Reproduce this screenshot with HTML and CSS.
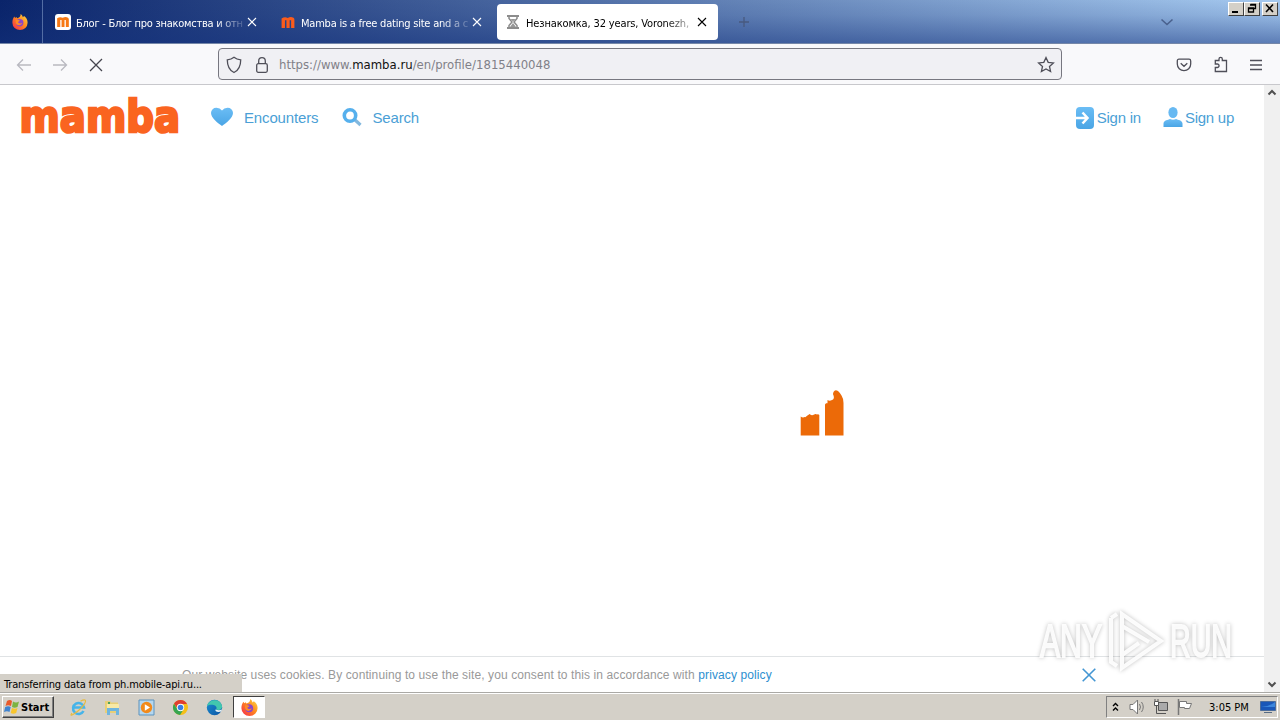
FILE: index.html
```html
<!DOCTYPE html>
<html lang="en">
<head>
<meta charset="utf-8">
<title>Mamba</title>
<link rel="stylesheet" href="styles.css">
</head>
<body>
<svg class="defs" width="0" height="0">
  <defs>
    <linearGradient id="blue" x1="0" y1="0" x2="0" y2="1"><stop offset="0" stop-color="#6bbdf5"/><stop offset="1" stop-color="#4aa5e5"/></linearGradient>
    <linearGradient id="flame" x1="1" y1="0" x2="0" y2="1"><stop offset="0" stop-color="#ffe14a"/><stop offset=".45" stop-color="#ff8a1e"/><stop offset="1" stop-color="#f5254f"/></linearGradient>
    <linearGradient id="edge" x1="0" y1="0" x2="1" y2="1"><stop offset="0" stop-color="#1a8fd0"/><stop offset="1" stop-color="#0b54a5"/></linearGradient>
    <symbol id="firefox" viewBox="0 0 16 16">
      <path d="M8.6 0c1.4 1 2 2 2.2 3.200l1.300-1.200c2 1.600 3.700 3.800 3.500 6.800A7.600 7.200 0 0 1 .4 8.800C.3 6 1.300 3.800 2.500 2.600l.5 1.500L4.500 3l.6 1.200C7 3.800 8.800 2.500 8.600 0z" fill="url(#flame)"/>
      <circle cx="7.700" cy="8.700" r="3.700" fill="#8d46c9"/>
      <path d="M3.600 6.200c1.600-1 3-.4 4.400.6L6 8c.3 1.500 2.500 2 4.200.8-.6 2.800-5 3.400-6.300.4z" fill="#ff8c24"/>
    </symbol>
    <symbol id="cross" viewBox="0 0 10 10"><path d="M1 1l8 8M9 1L1 9" fill="none" stroke="currentColor" stroke-width="1.100"/></symbol>
    <symbol id="m" viewBox="0 0 14 12"><path d="M0 12V1.500Q3.500-.7 6.700 1 10-.7 13 .8 14 1.500 14 3v9h-3.600V3.500H8.800V12H5.300V3.500H3.700V12z" fill="currentColor"/></symbol>
  </defs>
</svg>
<div class="screen">
  <header class="titlebar">
    <div class="pinned"><svg width="16" height="16"><use href="#firefox"/></svg></div>
    <div class="tab">
      <span class="favicon boxed"><svg width="12" height="10"><use href="#m"/></svg></span>
      <span class="label t1">Блог - Блог про знакомства и отн</span>
      <svg class="close" width="10" height="10"><use href="#cross"/></svg>
    </div>
    <div class="tab">
      <span class="favicon"><svg width="14" height="11"><use href="#m"/></svg></span>
      <span class="label t2">Mamba is a free dating site and a c</span>
      <svg class="close" width="10" height="10"><use href="#cross"/></svg>
    </div>
    <div class="tab active">
      <span class="favicon"><svg width="16" height="16" viewBox="0 0 16 16" fill="none" stroke="#8c8c8c"><path d="M2 2h12M2 14h12" stroke-width="2"/><path d="M4 2.500v2L7 8l-3 3.500v2M12 2.500v2L9 8l3 3.500v2" stroke-width="1.500"/><path d="M5.500 5h5L8 7.500zM8 9l3 4H5z" fill="#999" stroke="none"/></svg></span>
      <span class="label t3">Незнакомка, 32 years, Voronezh,</span>
      <svg class="close" width="10" height="10"><use href="#cross"/></svg>
    </div>
    <svg class="newtab" width="12" height="12" viewBox="0 0 12 12"><path d="M6 1v10M1 6h10" stroke="#48597f" stroke-width="1.300"/></svg>
    <svg class="alltabs" width="14" height="8" viewBox="0 0 14 8"><path d="M1.500 1.500L7 6.500l5.500-5" fill="none" stroke="#4a618d" stroke-width="1.600"/></svg>
    <div class="winbtns">
      <span class="wb"><svg width="12" height="11"><path d="M2 8h6v2H2z"/></svg></span>
      <span class="wb"><svg width="12" height="11"><path d="M4.500 1.500h5v4h-2M4 2h6M2.500 5h5v4h-5zM2 5.500h6" fill="none" stroke="#000" stroke-width="1.300"/></svg></span>
      <span class="wb last"><svg width="12" height="11"><path d="M2 1.500l7 7.500M9 1.500L2 9" stroke="#000" stroke-width="1.600"/></svg></span>
    </div>
  </header>
  <nav class="toolbar">
    <svg class="arrow" width="16" height="14" viewBox="0 0 16 14"><path d="M15 7H1.500M7 1.500L1.500 7 7 12.500"/></svg>
    <svg class="arrow" width="16" height="14" viewBox="0 0 16 14"><path d="M1 7h13.500M9 1.500L14.500 7 9 12.500"/></svg>
    <svg class="stop" width="14" height="14" viewBox="0 0 14 14"><path d="M1 1l12 12M13 1L1 13"/></svg>
    <div class="urlbar">
      <svg width="16" height="18" viewBox="0 0 16 18"><path d="M8 1.300C6 3 3.500 3.700 1.300 3.900c0 5.600 1.500 10 6.700 12.600 5.200-2.600 6.700-7 6.700-12.600C12.500 3.700 10 3 8 1.300z"/></svg>
      <svg width="14" height="18" viewBox="0 0 14 18"><rect x="1.700" y="7.700" width="10.600" height="8.600" rx="1.500"/><path d="M3.700 7.500V5a3.300 3.300 0 0 1 6.600 0v2.500"/></svg>
      <span class="url">https://www.<b>mamba.ru</b>/en/profile/1815440048</span>
      <svg class="star" width="18" height="18" viewBox="0 0 18 18"><path d="M9 1.500l2.200 4.800 5.200.6-3.900 3.500 1.100 5.200L9 13l-4.600 2.600 1.100-5.200L1.600 6.900l5.200-.6z"/></svg>
    </div>
    <div class="tools">
      <svg width="16" height="16" viewBox="0 0 16 16"><path d="M3 2.200h10q1.700 0 1.700 1.700V7a6.700 6.700 0 0 1-13.400 0V3.900Q1.300 2.200 3 2.200zM4.700 6.300L8 9.300l3.300-3"/></svg>
      <svg width="16" height="17" viewBox="0 0 16 17"><path d="M6 4.500V3a1.600 1.600 0 0 1 3.300 0v1.500h4.200v11H2.300v-4h2a1.700 1.700 0 0 0 0-3.500h-2V4.500z"/></svg>
      <svg width="14" height="14" viewBox="0 0 14 14"><path d="M1 2.500h12M1 7h12M1 11.500h12"/></svg>
    </div>
  </nav>
  <div class="viewport">
    <main class="page">
      <div class="sitebar">
        <svg class="logo" width="164" height="42" viewBox="0 0 164 42"><text x="1.500" y="37.500" textLength="160.500" lengthAdjust="spacingAndGlyphs">mamba</text></svg>
        <svg class="heart" width="24" height="20" viewBox="0 0 24 20"><path d="M12 19C8 16 1 11 1 6a5.300 5.300 0 0 1 5.500-5.300Q10 .7 12 3.500 14 .7 17.500.7A5.300 5.300 0 0 1 23 6c0 5-7 10-11 13z" fill="url(#blue)"/></svg>
        <a class="enc">Encounters</a>
        <svg class="mag" width="20" height="18" viewBox="0 0 20 18"><path d="M12 11l6.500 6" stroke="#83b8de" stroke-width="3.200"/><circle cx="8" cy="7.500" r="5.700" fill="none" stroke="#56b0ed" stroke-width="3.600"/></svg>
        <a class="search">Search</a>
        <div class="account">
          <svg width="18" height="22" viewBox="0 0 18 22"><rect width="18" height="22" rx="4" fill="url(#blue)"/><path d="M0 11h11M6.500 5.500l5 5.500-5 5.500" fill="none" stroke="#fff" stroke-width="2.500"/></svg>
          <a class="in">Sign in</a>
          <svg class="person" width="20" height="20" viewBox="0 0 20 20"><ellipse cx="10" cy="5.500" rx="4.600" ry="5.500" fill="#67b9f2"/><path d="M.5 20v-3.500C1 13 5 13 7 12q3 1.500 6 0c2 1 6 1 6.500 4.500V20z" fill="url(#blue)"/></svg>
          <a class="up">Sign up</a>
        </div>
      </div>
      <div class="loading">
        <svg width="46" height="48" viewBox="0 0 46 48"><path d="M.7 45.500V26.500q2 1.500 4 .5 1 .5 2-1l3-2q2 2 4 .8 2-1.300 3.300-.3 1.500-.6 2.300.6v20.400zM25 45.500V14.500l1-1.200h1.500V10q2 1.500 4.500 0 2.500-1 1.700-4-1.500-1.500-.2-4 1.500-3 4.500-1 2 1.500 3.500 4.500Q43.500 8.500 43.500 13v32.500z" fill="#ec6a08"/></svg>
      </div>
      <div class="cookies">
        <p>Our website uses cookies. By continuing to use the site, you consent to this in accordance with <a>privacy policy</a></p>
        <svg width="14" height="14" viewBox="0 0 14 14"><path d="M.7.700l12.600 12.600M13.300.7L.7 13.300" stroke="#4396d3" stroke-width="1.600"/></svg>
      </div>
    </main>
    <div class="scroll">
      <svg width="10" height="7" viewBox="0 0 10 7"><path d="M1.500 5.500L5 2l3.500 3.500"/></svg>
      <svg width="10" height="7" viewBox="0 0 10 7"><path d="M1.500 1.500L5 5l3.500-3.500"/></svg>
    </div>
    <div class="status"><span>Transferring data from ph.mobile-api.ru...</span></div>
    <svg class="mark" width="210" height="76" viewBox="0 0 210 76">
      <g class="glow">
        <text x="8" y="54" textLength="62" lengthAdjust="spacingAndGlyphs">ANY</text>
        <text x="138" y="54" textLength="62" lengthAdjust="spacingAndGlyphs">RUN</text>
        <path d="M79 15v44l6 4M79 15l6-4"/><path d="M90 11v54l39-27z"/><path d="M90 23l27 16M90 52l17-12"/>
      </g>
    </svg>
  </div>
  <footer class="taskbar">
    <div class="start"><svg width="17" height="16" viewBox="0 0 17 16"><path d="M3 2q3-2 5 0L7 7Q4 5.500 1.500 7z" fill="#e8592a"/><path d="M9 2.500q3 2 6 0L13.500 8q-3 1.500-5.500 0z" fill="#7cb342"/><path d="M1.200 8q3-1.500 5.500 0l-1.200 5Q3 11.500 0 13z" fill="#3f83cf"/><path d="M8 9q3 1.500 5.500 0l-1.300 5q-3 1.500-5.500 0z" fill="#f8c52c"/></svg><span>Start</span></div>
    <div class="apps">
      <svg width="17" height="17" viewBox="0 0 17 17"><path d="M13.500 12A5.500 5.500 0 1 1 14 8.500H4" fill="none" stroke="#46b4e9" stroke-width="2.600"/><path d="M2 14C-1 18 3 16 8 12s9-10 7-11q-1.500-.5-4.500 1.200" fill="none" stroke="#e6bb3f" stroke-width="1.200"/></svg>
      <svg width="17" height="17" viewBox="0 0 17 17"><path d="M1 2h5l1 1.500h7V14H1z" fill="#e8cf77"/><path d="M3 5h12v7H3z" fill="#f8e9a6"/><path d="M3 9h12v7h-3v-4H6v4H3z" fill="#6fb5df"/><path d="M4 4h2" stroke="#4fa35a" stroke-width="2"/></svg>
      <svg width="17" height="17" viewBox="0 0 17 17"><path d="M1 1h15v15H1z" fill="#b5d7ef" stroke="#5d93bd"/><circle cx="8.500" cy="8.500" r="5.700" fill="#f28a1b"/><path d="M6.800 5.300v6.400L12 8.500z" fill="#fff"/></svg>
      <svg width="17" height="17" viewBox="0 0 17 17"><circle cx="8.500" cy="8.500" r="7.500" fill="#f5bf18"/><path d="M2 4.700A7.500 7.500 0 0 1 15 5H8.500L6 10z" fill="#df3e30"/><path d="M2 4.700A7.500 7.500 0 0 0 8 16l3.500-5.500H5.500z" fill="#36a551"/><circle cx="8.500" cy="8.500" r="3.700" fill="#fff"/><circle cx="8.500" cy="8.500" r="2.800" fill="#397fe2"/></svg>
      <svg width="17" height="17" viewBox="0 0 17 17"><circle cx="8.500" cy="8.500" r="7.700" fill="url(#edge)"/><path d="M1 7C3 0 14-1 16 7c.5 4-3.500 4.500-6 3.500 1-1 .8-3-1-4S3 5.500 1 7z" fill="#42c7ae"/><path d="M9.500 10.500c-1 1.500 2 3.300 5.500 2 1-1 1-1.500.8-2-2 1-4 .8-6.300 0z" fill="#e8f3f6"/></svg>
      <span class="running"><svg width="17" height="17"><use href="#firefox"/></svg></span>
    </div>
    <div class="tray">
      <svg width="8" height="12" viewBox="0 0 8 12"><path d="M1 5l2.500-2.500L6 5M1 9.500L3.500 7 6 9.500" fill="none" stroke="#000" stroke-width="1.400"/></svg>
      <svg class="snd" width="17" height="16" viewBox="0 0 17 16"><path d="M1 5.500h3L8.500 1v14L4 10.500H1z" fill="#fff" stroke="#777"/><path d="M10.500 5q2 3 0 6M12.500 3q3.500 5 0 10" fill="none" stroke="#777"/></svg>
      <svg class="net" width="17" height="16" viewBox="0 0 17 16"><path d="M5.500 3.500h9v8h-9z" fill="#aaa" stroke="#555"/><path d="M1.500 2.500h4v4h-4z" fill="#fff" stroke="#555"/><path d="M3.500 7v7.500H13M2 2V0M5 2V0" fill="none" stroke="#555"/></svg>
      <svg class="flag" width="17" height="16" viewBox="0 0 17 16"><path d="M1.500 0v16" stroke="#777" stroke-width="1.500"/><path d="M2.500 2.500h7v2h5l-2 5h-5v-1h-5z" fill="#fff" stroke="#777"/></svg>
      <span class="clock">3:05 PM</span>
      <svg class="desk" width="16" height="14" viewBox="0 0 16 14"><path d="M.5 1.500h15v9H.5z" fill="#1a57b8" stroke="#4d6d9b"/><path d="M1 7q7 0 14-5v5z" fill="#3c86dc"/><path d="M4 12.500h8" stroke="#566b83"/></svg>
    </div>
  </footer>
</div>
</body>
</html>
```
FILE: styles.css
```css
* { box-sizing: border-box; }
body { margin: 0; overflow: hidden; font-family: "DejaVu Sans Condensed", "DejaVu Sans", sans-serif; }
svg { display: block; flex: none; overflow: visible; }
.defs { position: absolute; }
.screen { width: 1280px; height: 720px; display: flex; flex-direction: column; background: #fff; }

.titlebar { height: 44px; flex: none; display: flex; align-items: flex-start; border-bottom: 1px solid #7587a8;
  background: linear-gradient(180deg, rgba(20,50,125,0) 0%, rgba(20,50,125,.12) 35%, rgba(20,50,125,.5) 100%), linear-gradient(90deg, #0a246a, #a6caf0); }
.pinned { width: 43px; height: 43px; padding: 14px 0 0 12px; border-right: 1px solid #536da4; }
.tab { width: 221px; height: 36px; margin: 4px 4px 0 0; padding: 0 11px 0 8px; display: flex; align-items: center; color: #fff; border-radius: 4px; }
.pinned + .tab { margin-left: 4px; }
.tab.active { background: #fff; color: #000; margin-left: 0; }
.favicon { width: 16px; height: 16px; display: flex; align-items: center; justify-content: center; color: #fa5c1c; flex: none; }
.boxed { background: #fff; border-radius: 3px; color: #f77914; }
.label { width: 168px; margin: 3px 0 0 5px; font-size: 11px; line-height: 16px; white-space: nowrap; flex: none;
  -webkit-mask-image: linear-gradient(90deg, #000 140px, rgba(0,0,0,.15) 168px); mask-image: linear-gradient(90deg, #000 140px, rgba(0,0,0,.15) 168px); }
.t1 { letter-spacing: -.26px; }
.t2 { letter-spacing: -.22px; }
.t3 { letter-spacing: -.14px; }
.close { margin-left: 3px; }
.newtab { margin: 16px 0 0 16px; }
.alltabs { margin: 18px 0 0 auto; }
.winbtns { display: flex; margin: 2px 2px 0 54px; }
.wb { width: 16px; height: 14px; padding: 0 0 0 1px; background: #d4d0c8; border: 1px solid; border-color: #fff #404040 #404040 #fff; }
.last { margin-left: 2px; }

.toolbar { height: 41px; flex: none; display: flex; align-items: center; background: #f9f9fb; border-bottom: 1px solid #c8c8cc; padding-left: 16px; }
.toolbar svg { fill: none; stroke: #4f4f59; stroke-width: 1.3; margin-top: 1px; }
.toolbar .arrow { stroke: #b9b9c0; margin-right: 20px; }
.toolbar .stop { margin-left: 1px; stroke: #45454e; }
.urlbar { width: 844px; height: 32px; margin-left: 115px; padding: 0 6px 0 7px; display: flex; align-items: center; background: #f0f0f4; border: 1px solid #777780; border-radius: 4px; }
.urlbar svg + svg { margin-left: 13px; }
.url { margin-left: 10px; font-size: 13px; color: #808088; white-space: nowrap; }
.url b { font-weight: normal; color: #111; }
.toolbar .star { margin-left: auto; }
.tools { margin-left: 114px; display: flex; align-items: center; gap: 20.5px; }

.viewport { position: relative; flex: 1; min-height: 0; display: flex; }
.page { flex: 1; display: flex; flex-direction: column; font-family: "Liberation Sans", Arial, sans-serif; }
.sitebar { height: 60px; display: flex; align-items: center; padding: 5px 30px 0 18px; color: #4b9fd6; font-size: 15px; letter-spacing: -.15px; }
.logo { margin-top: -6px; }
.logo text { font: bold 44px "DejaVu Sans", sans-serif; letter-spacing: 0; fill: #fa6420; stroke: #fa6420; stroke-width: 2.6px; }
.heart { margin: -1px 0 0 28px; }
.enc { margin-left: 10px; }
.mag { margin: -1px 0 0 24px; }
.search { margin-left: 10px; }
.account { margin-left: auto; display: flex; align-items: center; }
.in { margin-left: 3px; letter-spacing: -.25px; }
.person { margin: -2px 0 0 22px; }
.up { margin-left: 2px; letter-spacing: -.25px; }
.loading { flex: 1; padding: 245px 0 0 800px; }
.cookies { height: 36px; display: flex; align-items: center; border-top: 1px solid #e0e3e5; padding-left: 182px; font-size: 12px; letter-spacing: .104px; color: #999; }
.cookies p { width: 900px; margin: 1px 0 0; white-space: nowrap; }
.cookies a { color: #2d8fd0; }
.scroll { width: 16px; background: #f0f0f0; display: flex; flex-direction: column; justify-content: space-between; align-items: center; padding: 4px 0; }
.scroll path { fill: none; stroke: #505050; stroke-width: 2; }
.status { position: absolute; left: 0; bottom: 0; width: 242px; height: 18px; padding-left: 4px; background: #d4d0c8; font-size: 11px; line-height: 21px; letter-spacing: -.155px; white-space: nowrap; }
.mark { position: absolute; left: 1032px; top: 518px; filter: drop-shadow(0 0 2px rgba(0,0,0,.28)); }
.glow { fill: none; stroke: #fff; stroke-width: 4; opacity: .9; }
.glow text { font: 46px "Liberation Sans", sans-serif; fill: #fff; stroke-width: 1.8; }

.taskbar { height: 28px; flex: none; display: flex; align-items: center; background: #d4d0c8; border-top: 1px solid #aaa9a5; box-shadow: inset 0 1px #fff; padding: 1px 2px 0; font-size: 11px; }
.start { width: 52px; height: 22px; display: flex; align-items: center; padding-left: 1px; border: 1px solid; border-color: #fff #404040 #404040 #fff; box-shadow: inset -1px -1px #808080; font-weight: bold; }
.apps { display: flex; align-items: center; gap: 17px; margin-left: 16px; }
.running { width: 32px; height: 22px; margin-left: -7px; display: flex; align-items: center; justify-content: center; background: #fff; border: 1px solid; border-color: #404040 #fff #fff #404040; }
.tray { width: 172px; height: 22px; margin-left: auto; display: flex; align-items: center; padding-left: 5px; border: 1px solid; border-color: #808080 #fff #fff #808080; }
.snd { margin-left: 9px; }
.net { margin-left: 7px; }
.flag { margin-left: 7px; }
.clock { width: 40px; margin-left: 15px; white-space: nowrap; }
.desk { margin-left: 11px; }
```
